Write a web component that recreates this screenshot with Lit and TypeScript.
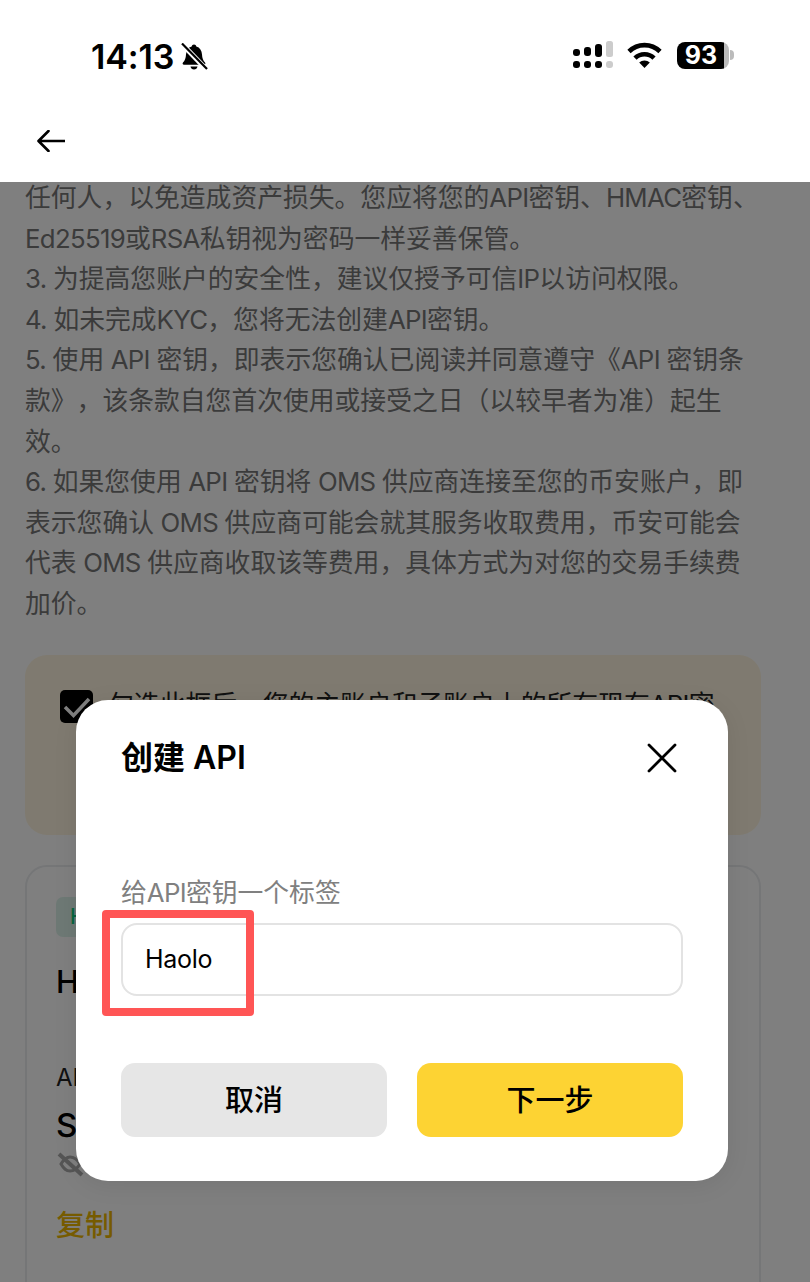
import { LitElement, html, css, svg } from "lit";
import { customElement } from "lit/decorators.js";

const LINES = [
  "任何人，以免造成资产损失。您应将您的API密钥、HMAC密钥、",
  "Ed25519或RSA私钥视为密码一样妥善保管。",
  "3. 为提高您账户的安全性，建议仅授予可信IP以访问权限。",
  "4. 如未完成KYC，您将无法创建API密钥。",
  "5. 使用 API 密钥，即表示您确认已阅读并同意遵守《API 密钥条",
  "款》，该条款自您首次使用或接受之日（以较早者为准）起生",
  "效。",
  "6. 如果您使用 API 密钥将 OMS 供应商连接至您的币安账户，即",
  "表示您确认 OMS 供应商可能会就其服务收取费用，币安可能会",
  "代表 OMS 供应商收取该等费用，具体方式为对您的交易手续费",
  "加价。",
];

/* Latin runs are set slightly tighter than the CJK around them. */
const mixed = (text: string) =>
  text
    .split(/([A-Za-z0-9. ]+)/)
    .map((part, i) => (i % 2 ? html`<span class="lat">${part}</span>` : part));

const signal = svg`<svg class="signal" width="40" height="28" viewBox="0 0 40 28">
  <rect x="0" y="8" width="7" height="7" rx="3" fill="#000"/>
  <rect x="11" y="6" width="7" height="9" rx="3" fill="#000"/>
  <rect x="22" y="3" width="7" height="13" rx="3" fill="#000"/>
  <rect x="33" y="0" width="7" height="16" rx="2.5" fill="#ccc"/>
  <rect x="0" y="20" width="7" height="7" rx="3" fill="#000"/>
  <rect x="11" y="20" width="7" height="7" rx="3" fill="#000"/>
  <rect x="22" y="20" width="7" height="7" rx="3" fill="#000"/>
  <rect x="33" y="20" width="7" height="7" rx="3" fill="#ccc"/>
</svg>`;

const wifi = svg`<svg width="35" height="26" viewBox="0 0 35 26" fill="none">
  <path d="M2 9.5A22 22 0 0 1 33 9.5" stroke="#000" stroke-width="4.6"/>
  <path d="M8 16.2A13.5 13.5 0 0 1 27 16.2" stroke="#000" stroke-width="4.6"/>
  <path d="M17.5 26L12.2 20.6A7.6 7.6 0 0 1 22.8 20.6Z" fill="#000"/>
</svg>`;

const bell = svg`<svg width="28" height="28" viewBox="0 0 28 28">
  <path d="M14 1.5c1.3 0 2.1.9 2.3 2 3.6 1 5.5 4 5.7 8 .2 3.600 1 6 3 8 .8.9.3 2.200-1 2.200H4c-1.300 0-1.800-1.300-1-2.200 2-2 2.800-4.400 3-8 .2-4 2.100-7 5.700-8 .2-1.100 1-2 2.300-2z" fill="#000"/>
  <path d="M10.500 23.500h7c-.3 1.800-1.700 3-3.500 3s-3.200-1.200-3.500-3z" fill="#000"/>
  <path d="M2 1l24 25" stroke="#fff" stroke-width="5"/>
  <path d="M2 0.500l25 25.500" stroke="#000" stroke-width="2.200"/>
</svg>`;

const back = svg`<svg class="back" width="28" height="22" viewBox="0 0 28 22" fill="none">
  <path d="M27.500 11H2M11.500 1L1.500 11l10 10" stroke="#000" stroke-width="2.600" stroke-linecap="round" stroke-linejoin="round"/>
</svg>`;

const closeIcon = svg`<svg width="30" height="30" viewBox="0 0 30 30" fill="none">
  <path d="M2 2l26 26M28 2L2 28" stroke="#000" stroke-width="2.800" stroke-linecap="round"/>
</svg>`;

const check = svg`<svg width="34" height="34" viewBox="0 0 34 34" fill="none">
  <path d="M5 17l8.500 8.500L29 9" stroke="#fff" stroke-width="3.500"/>
</svg>`;

const eyeOff = svg`<svg width="30" height="26" viewBox="0 0 30 26" fill="none">
  <path d="M6 13c3-5 6-7 9-7s7 2 10 7c-3 5-6 7-10 7s-6-2-9-7z" stroke="#aaa" stroke-width="3"/>
  <path d="M4 3l23 21" stroke="#aaa" stroke-width="4"/>
</svg>`;

@customElement("app-root")
export class AppRoot extends LitElement {
  static styles = css`
    :host {
      display: block;
      position: relative;
      width: 810px;
      height: 1282px;
      overflow: hidden;
      background: #fff;
      color: #000;
      font-family: Inter, "Noto Sans CJK SC", sans-serif;
      text-spacing-trim: space-all;
    }
    .lat { letter-spacing: -0.7px; }
    .top {
      position: relative;
      z-index: 3;
      height: 182px;
      background: #fff;
      display: flex;
      flex-direction: column;
    }
    .status {
      height: 112px;
      display: flex;
      align-items: flex-start;
      justify-content: space-between;
      padding: 42px 76px 0 91px;
      box-sizing: border-box;
    }
    .left, .right { display: flex; align-items: center; }
    .left { gap: 6px; height: 30px; }
    .time { font-size: 34px; font-weight: 600; line-height: 30px; letter-spacing: -0.1px; }
    .right { gap: 14px; height: 28px; margin-top: -1px; }
    .battery { display: flex; align-items: center; gap: 1px; margin-left: 1px; }
    .cell {
      width: 52px;
      height: 27px;
      border-radius: 8px;
      background: linear-gradient(90deg, #000 90%, #bbb 90%);
      color: #fff;
      font-size: 25px;
      font-weight: 700;
      line-height: 27px;
      text-align: center;
      padding-right: 4px;
      box-sizing: border-box;
    }
    .tip { width: 4px; height: 10px; background: #bbb; border-radius: 0 4px 4px 0; }
    .nav { padding: 18px 0 0 37px; }
    .back { display: block; }

    .content { padding: 0 49px 0 25px; height: 1100px; }
    .para { color: #777; font-size: 25.8px; line-height: 40.6px; white-space: nowrap; margin-top: -4px; }
    .notice {
      margin-top: 30.5px;
      height: 180px;
      border-radius: 22px;
      background: #fff5e0;
      box-sizing: border-box;
      padding: 35px;
      display: flex;
      gap: 15px;
      font-size: 25.8px;
      line-height: 30px;
      color: #222;
      white-space: nowrap;
      overflow: hidden;
    }
    .box {
      flex: none;
      width: 33px;
      height: 33px;
      border-radius: 5px;
      background: #000;
    }
    .box svg { display: block; }
    .card {
      margin-top: 30px;
      height: 460px;
      border: 2px solid #eaecef;
      border-radius: 22px;
      box-sizing: border-box;
      padding: 30px 29px;
    }
    .tag {
      width: 110px;
      height: 40px;
      border-radius: 7px;
      background: #dcf3ea;
      color: #0ecb81;
      font-size: 21px;
      line-height: 40px;
      padding-left: 14px;
      box-sizing: border-box;
      font-weight: 500;
    }
    .name { margin-top: 25px; font-size: 31px; line-height: 40px; font-weight: 500; }
    .lbl { margin-top: 58px; font-size: 24px; line-height: 36px; color: #222; }
    .key { margin-top: 9px; font-size: 33px; line-height: 40px; font-weight: 500; }
    .eye { margin-top: 6px; height: 26px; margin-left: -1px; }
    .copy { margin-top: 29px; font-size: 29px; line-height: 40px; color: #edb600; font-weight: 500; }

    .scrim {
      position: absolute;
      inset: 182px 0 0 0;
      z-index: 2;
      background: rgba(0, 0, 0, 0.5);
    }
    .modal {
      position: absolute;
      z-index: 4;
      left: 76px;
      top: 700px;
      width: 652px;
      height: 481px;
      border-radius: 32px;
      background: #fff;
      box-sizing: border-box;
      padding: 36px 45px 44px;
      display: flex;
      flex-direction: column;
      box-shadow: 0 4px 24px rgba(0, 0, 0, 0.08);
    }
    .head { display: flex; align-items: center; justify-content: space-between; height: 44px; padding-right: 6px; }
    .title { font-size: 32px; font-weight: 600; line-height: 44px; }
    .head svg { display: block; }
    .label { margin-top: 95px; font-size: 25.8px; line-height: 36px; color: #808080; }
    .field { position: relative; margin-top: 12px; }
    .input {
      height: 73px;
      border: 2px solid #e3e3e3;
      border-radius: 16px;
      box-sizing: border-box;
      padding: 0 0 2px 22px;
      display: flex;
      align-items: center;
      font-size: 25px;
      letter-spacing: -0.3px;
      font-weight: 400;
    }
    .mark {
      position: absolute;
      left: -19px;
      top: -13px;
      width: 152px;
      height: 106px;
      box-sizing: border-box;
      border: 8px solid #ff5555;
      border-radius: 4px;
    }
    .btns { margin-top: auto; display: flex; gap: 30px; }
    .btn {
      flex: 1;
      height: 74px;
      border-radius: 14px;
      display: flex;
      align-items: center;
      justify-content: center;
      padding-bottom: 4px;
      box-sizing: border-box;
      font-size: 29px;
      font-weight: 500;
    }
    .cancel { background: #e6e6e6; }
    .next { background: #fdd333; }
  `;

  render() {
    return html`
      <div class="top">
        <div class="status">
          <div class="left"><span class="time">14:13</span>${bell}</div>
          <div class="right">
            ${signal}${wifi}
            <div class="battery"><div class="cell">93</div><div class="tip"></div></div>
          </div>
        </div>
        <div class="nav">${back}</div>
      </div>
      <div class="content">
        <div class="para">${LINES.map((l) => html`<div>${mixed(l)}</div>`)}</div>
        <div class="notice">
          <div class="box">${check}</div>
          <div>${mixed("勾选此框后，您的主账户和子账户上的所有现有API密")}</div>
        </div>
        <div class="card">
          <div class="tag">HMAC</div>
          <div class="name">Haolo</div>
          <div class="lbl">API 密钥</div>
          <div class="key">SxZ</div>
          <div class="eye">${eyeOff}</div>
          <div class="copy">复制</div>
        </div>
      </div>
      <div class="scrim"></div>
      <div class="modal">
        <div class="head"><span class="title">创建 API</span>${closeIcon}</div>
        <div class="label">${mixed("给API密钥一个标签")}</div>
        <div class="field">
          <div class="input">Haolo</div>
          <div class="mark"></div>
        </div>
        <div class="btns">
          <div class="btn cancel">取消</div>
          <div class="btn next">下一步</div>
        </div>
      </div>
    `;
  }
}
